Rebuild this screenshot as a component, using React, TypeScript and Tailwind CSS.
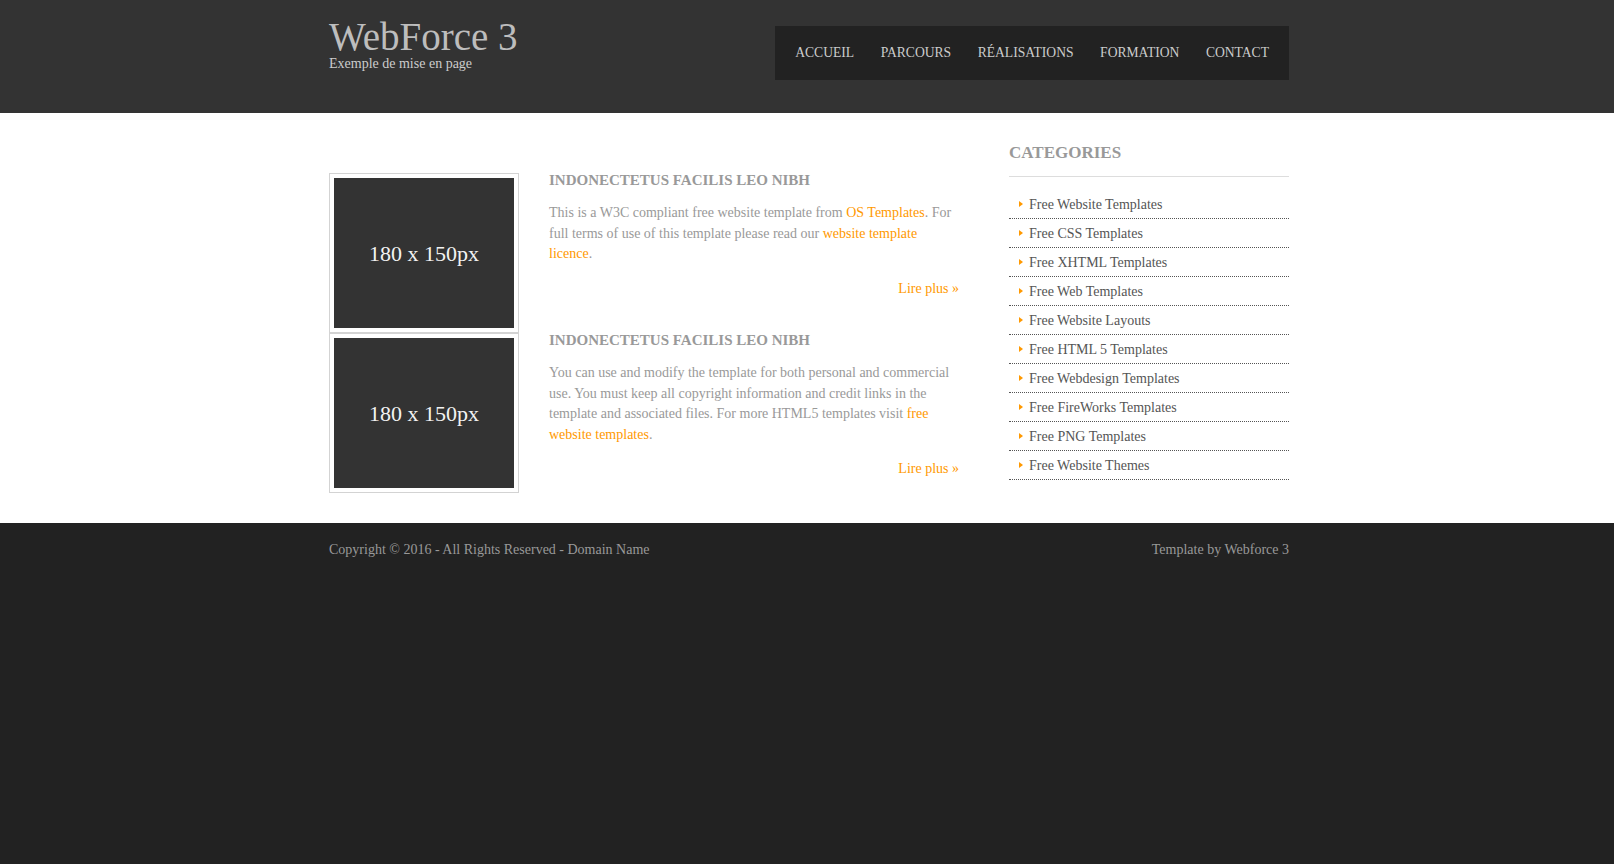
import React from "react";

const serif = { fontFamily: '"Liberation Serif", "Times New Roman", serif' };

const categories = [
  "Free Website Templates",
  "Free CSS Templates",
  "Free XHTML Templates",
  "Free Web Templates",
  "Free Website Layouts",
  "Free HTML 5 Templates",
  "Free Webdesign Templates",
  "Free FireWorks Templates",
  "Free PNG Templates",
  "Free Website Themes",
];

function Thumb() {
  return (
    <div className="w-[190px] h-[160px] shrink-0 border border-[#d3d3d3] p-1 bg-white">
      <div className="w-[180px] h-[150px] bg-[#333333] flex items-center justify-center text-[22px] text-[#f2f2f2]">
        180 x 150px
      </div>
    </div>
  );
}

function Link({ children }: { children: React.ReactNode }) {
  return <a className="text-[#ff9900]">{children}</a>;
}

function Article({ lines }: { lines: React.ReactNode[] }) {
  return (
    <div className="flex">
      <Thumb />
      <div className="ml-[30px] flex-1">
        <h3 className="text-[15px] leading-[15px] font-bold text-[#999999] uppercase">
          Indonectetus facilis leo nibh
        </h3>
        <div className="mt-[15px] text-[14px] leading-[20.6px] text-[#999999]">
          {lines.map((l, i) => (
            <div key={i} className="whitespace-nowrap">
              {l}
            </div>
          ))}
        </div>
        <div className="mt-[14px] text-right text-[14px] leading-[20.6px]">
          <Link>Lire plus »</Link>
        </div>
      </div>
    </div>
  );
}

export default function App() {
  return (
    <div className="min-h-screen bg-[#222222]" style={serif}>
      <header className="bg-[#333333] h-[113px]">
        <div className="mx-auto w-[964px] pl-1 flex items-start">
          <div className="mt-[17px]">
            <h1 className="text-[39px] leading-[39px] text-[#bdbdbd]">WebForce 3</h1>
            <p className="mt-[1px] text-[14px] leading-[14px] text-[#cccccc]">Exemple de mise en page</p>
          </div>
          <nav className="ml-auto mt-[26px] h-[54px] bg-[#222222] px-[20px] flex items-center gap-[26.5px] text-[13.6px] text-[#cccccc] uppercase">
            <a>Accueil</a>
            <a>Parcours</a>
            <a>Réalisations</a>
            <a>Formation</a>
            <a>Contact</a>
          </nav>
        </div>
      </header>

      <main className="bg-white">
        <div className="mx-auto w-[964px] pl-1 flex pb-[30px]">
          <section className="w-[630px] pt-[60px]">
            <Article
              lines={[
                <>
                  This is a W3C compliant free website template from <Link>OS Templates</Link>. For
                </>,
                <>
                  full terms of use of this template please read our <Link>website template</Link>
                </>,
                <>
                  <Link>licence</Link>.
                </>,
              ]}
            />
            <Article
              lines={[
                <>You can use and modify the template for both personal and commercial</>,
                <>use. You must keep all copyright information and credit links in the</>,
                <>
                  template and associated files. For more HTML5 templates visit <Link>free</Link>
                </>,
                <>
                  <Link>website templates</Link>.
                </>,
              ]}
            />
          </section>
          <aside className="ml-[50px] w-[280px] pt-[31px]">
            <h2 className="text-[17px] leading-[17px] font-bold text-[#999999] uppercase pb-[15px] border-b border-[#dddddd]">
              Categories
            </h2>
            <ul className="mt-[13px]">
              {categories.map((c) => (
                <li
                  key={c}
                  className="h-[29px] border-b border-dotted border-[#555555] flex items-center pl-[10px] text-[14px] text-[#555555]"
                >
                  <span className="w-0 h-0 border-y-[3px] border-y-transparent border-l-[4px] border-l-[#ff9900] mr-[6px]" />
                  {c}
                </li>
              ))}
            </ul>
          </aside>
        </div>
      </main>

      <footer className="bg-[#222222]">
        <div className="mx-auto w-[964px] pl-1 pt-[17px] flex justify-between text-[14px] leading-[20px] text-[#999999]">
          <span>Copyright © 2016 - All Rights Reserved - Domain Name</span>
          <span>Template by Webforce 3</span>
        </div>
      </footer>
    </div>
  );
}
